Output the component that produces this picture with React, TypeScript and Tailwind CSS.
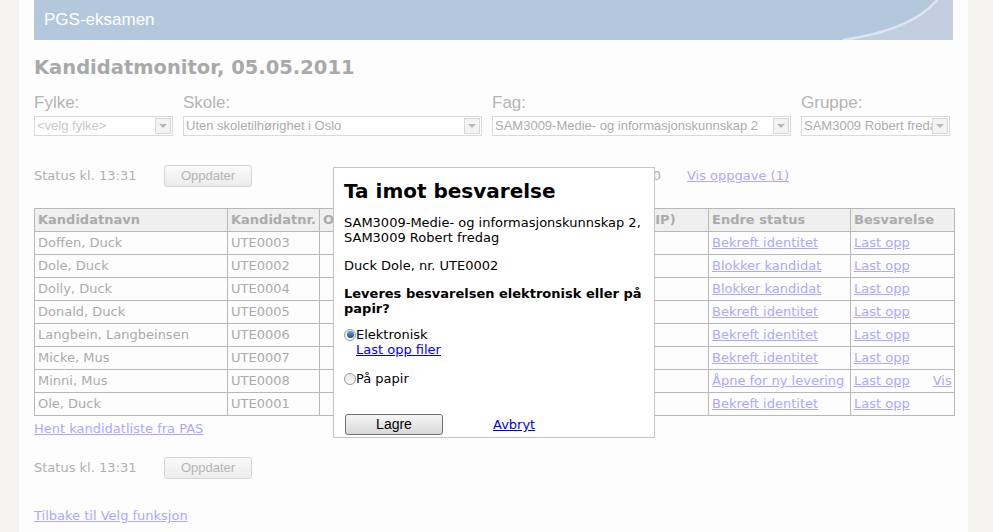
import React from "react";

const verdana = { fontFamily: '"DejaVu Sans", Verdana, sans-serif' };
const arial = { fontFamily: '"Liberation Sans", Arial, sans-serif' };

interface Candidate {
  name: string;
  nr: string;
  action: string;
  extra?: boolean;
}

const candidates: Candidate[] = [
  { name: "Doffen, Duck", nr: "UTE0003", action: "Bekreft identitet" },
  { name: "Dole, Duck", nr: "UTE0002", action: "Blokker kandidat" },
  { name: "Dolly, Duck", nr: "UTE0004", action: "Blokker kandidat" },
  { name: "Donald, Duck", nr: "UTE0005", action: "Bekreft identitet" },
  { name: "Langbein, Langbeinsen", nr: "UTE0006", action: "Bekreft identitet" },
  { name: "Micke, Mus", nr: "UTE0007", action: "Bekreft identitet" },
  { name: "Minni, Mus", nr: "UTE0008", action: "Åpne for ny levering", extra: true },
  { name: "Ole, Duck", nr: "UTE0001", action: "Bekreft identitet" },
];

function FakeSelect({ text, width, placeholder }: { text: string; width: string; placeholder?: boolean }) {
  return (
    <div
      className={`${width} h-[20px] border border-[#dadada] bg-white flex items-center justify-between pl-[2px] pr-[1px]`}
      style={arial}
    >
      <span className={`text-[13px] whitespace-nowrap overflow-hidden ${placeholder ? "text-[#c8c8c8]" : "text-[#acacac]"}`}>
        {text}
      </span>
      <span className="w-[16px] h-[16px] shrink-0 border border-[#d8d8d8] bg-[#f3f3f3] flex items-center justify-center">
        <span className="w-0 h-0 border-l-[4px] border-r-[4px] border-t-[4px] border-l-transparent border-r-transparent border-t-[#b8b8b8]" />
      </span>
    </div>
  );
}

function StatusRow({ children }: { children?: React.ReactNode }) {
  return (
    <div className="flex items-center h-[22px]">
      <span className="w-[130px] text-[13px] text-[#b0b0b0]" style={verdana}>
        Status kl. 13:31
      </span>
      <button
        className="w-[88px] h-[22px] rounded-[3px] border border-[#d4d4d4] bg-gradient-to-b from-[#fafafa] to-[#ececec] text-[13px] text-[#b5b5b5]"
        style={arial}
      >
        Oppdater
      </button>
      {children}
    </div>
  );
}

function Radio({ checked }: { checked?: boolean }) {
  return (
    <span className="w-[12px] h-[12px] rounded-full border border-[#9a9a9a] bg-gradient-to-b from-[#e6e6e6] to-[#fafafa] flex items-center justify-center shrink-0">
      {checked && <span className="w-[7px] h-[7px] rounded-full bg-gradient-to-b from-[#5fa8e6] to-[#1a4f8a]" />}
    </span>
  );
}

export default function App() {
  const cell = "border border-[#b8b8b8] h-[23px] px-[3px] text-left whitespace-nowrap overflow-hidden";
  const link = "text-[#aca8ff] underline";
  return (
    <div className="min-h-screen bg-[#f5f4f0] relative" style={verdana}>
      <div className="ml-[19px] w-[949px] min-h-[532px] bg-[#fdfdfd] px-[15px] pb-[10px]">
        {/* header */}
        <div className="relative h-[40px] bg-[#b3c8dd] flex items-center pl-[10px] overflow-hidden">
          <svg className="absolute inset-0" width="920" height="40" viewBox="0 0 920 40">
            <path d="M809 40 Q878 30 903 0 L920 0 L920 40 Z" fill="#c2cde0" />
            <path d="M809 40 Q878 30 903 0" fill="none" stroke="#dfe5f0" strokeWidth="2.5" />
          </svg>
          <span className="relative text-white text-[17px]" style={arial}>
            PGS-eksamen
          </span>
        </div>

        <h1 className="mt-[15px] text-[19.5px] leading-[26px] font-bold text-[#a9a9a9]">Kandidatmonitor, 05.05.2011</h1>

        {/* filters */}
        <div className="mt-[8px] flex gap-[10px]" style={arial}>
          <div className="flex flex-col">
            <span className="text-[17px] leading-[27px] text-[#b4b4b4]">Fylke:</span>
            <FakeSelect text="<velg fylke>" width="w-[139px]" placeholder />
          </div>
          <div className="flex flex-col">
            <span className="text-[17px] leading-[27px] text-[#b4b4b4]">Skole:</span>
            <FakeSelect text="Uten skoletilhørighet i Oslo" width="w-[299px]" />
          </div>
          <div className="flex flex-col">
            <span className="text-[17px] leading-[27px] text-[#b4b4b4]">Fag:</span>
            <FakeSelect text="SAM3009-Medie- og informasjonskunnskap 2" width="w-[299px]" />
          </div>
          <div className="flex flex-col">
            <span className="text-[17px] leading-[27px] text-[#b4b4b4]">Gruppe:</span>
            <FakeSelect text="SAM3009 Robert fredag" width="w-[149px]" />
          </div>
        </div>

        <div className="mt-[29px]">
          <StatusRow>
            <span className="w-[409px] text-right text-[13px] text-[#b0b0b0]">Innleverte: 0 av 10</span>
            <a className={`ml-[26px] text-[13px] ${link}`}>Vis oppgave (1)</a>
          </StatusRow>
        </div>

        {/* table */}
        <table className="mt-[21px] border-collapse table-fixed w-[920px] text-[13px] text-[#ababab]">
          <colgroup>
            <col className="w-[193px]" />
            <col className="w-[92px]" />
            <col className="w-[270px]" />
            <col className="w-[119px]" />
            <col className="w-[142px]" />
            <col className="w-[104px]" />
          </colgroup>
          <thead>
            <tr className="bg-[#efefef]">
              <th className={`${cell} font-bold`}>Kandidatnavn</th>
              <th className={`${cell} font-bold`}>Kandidatnr.</th>
              <th className={`${cell} font-bold`}>Oppmøtestatus</th>
              <th className={`${cell} font-bold`}>Maskin (IP)</th>
              <th className={`${cell} font-bold`}>Endre status</th>
              <th className={`${cell} font-bold`}>Besvarelse</th>
            </tr>
          </thead>
          <tbody>
            {candidates.map((c) => (
              <tr key={c.nr}>
                <td className={cell}>{c.name}</td>
                <td className={cell}>{c.nr}</td>
                <td className={cell}></td>
                <td className={cell}></td>
                <td className={cell}>
                  <a className={link}>{c.action}</a>
                </td>
                <td className={cell}>
                  <a className={link}>Last opp</a>
                  {c.extra && <a className={`ml-[23px] ${link}`}>Vis</a>}
                </td>
              </tr>
            ))}
          </tbody>
        </table>

        <div className="mt-[5px] h-[16px] flex items-center">
          <a className={`text-[13px] ${link}`}>Hent kandidatliste fra PAS</a>
        </div>

        <div className="mt-[20px]">
          <StatusRow />
        </div>

        <div className="mt-[29px] h-[16px] flex items-center">
          <a className={`text-[13px] ${link}`}>Tilbake til Velg funksjon</a>
        </div>
      </div>

      {/* modal */}
      <div className="absolute left-[333px] top-[167px] w-[322px] h-[271px] bg-white border border-[#c4c4c4] pl-[10px] pr-[8px] pt-[11px] text-black text-[13px] leading-[15px]">
        <div className="text-[20px] leading-[24px] font-bold">Ta imot besvarelse</div>
        <p className="mt-[12px]">
          SAM3009-Medie- og informasjonskunnskap 2,
          <br />
          SAM3009 Robert fredag
        </p>
        <p className="mt-[13px]">Duck Dole, nr. UTE0002</p>
        <p className="mt-[13px] font-bold">Leveres besvarelsen elektronisk eller på papir?</p>
        <div className="mt-[11px] flex items-center">
          <Radio checked />
          <span>Elektronisk</span>
        </div>
        <a className="ml-[12px] text-[#0000ee] underline">Last opp filer</a>
        <div className="mt-[14px] flex items-center">
          <Radio />
          <span>På papir</span>
        </div>
        <div className="mt-[28px] flex items-center">
          <button
            className="ml-[1px] w-[98px] h-[21px] rounded-[3px] border border-[#707070] bg-gradient-to-b from-[#f6f6f6] to-[#d8d8d8] text-[14px] text-black"
            style={arial}
          >
            Lagre
          </button>
          <a className="ml-[50px] text-[#0000ee] underline">Avbryt</a>
        </div>
      </div>
    </div>
  );
}
